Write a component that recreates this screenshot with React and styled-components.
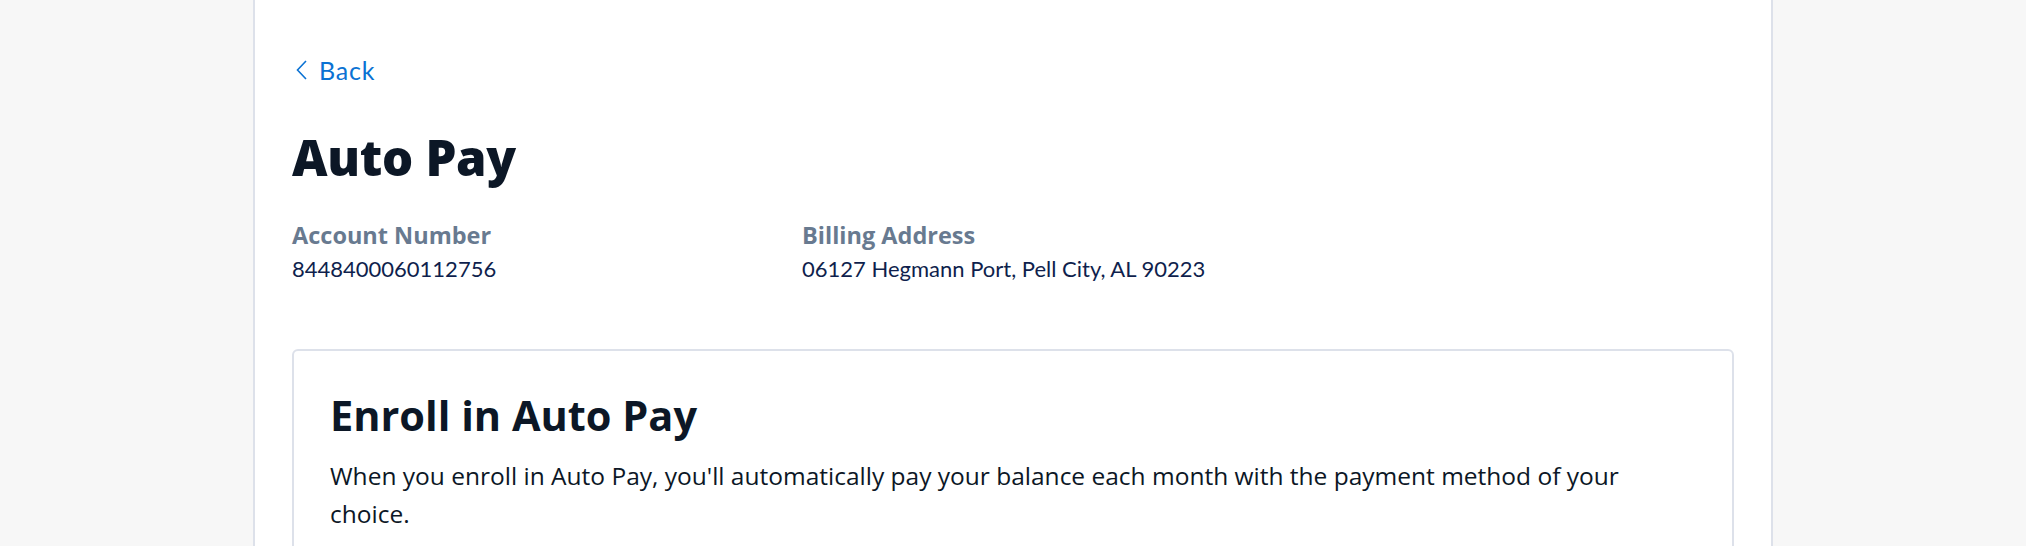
import React from 'react';
import styled, { createGlobalStyle } from 'styled-components';

const colors = {
  PAGE: '#f7f7f7',
  WHITE: '#ffffff',
  BORDER: '#dde1ea',
  BLUE: '#0b72d3',
  INK: '#0c1726',
  SLATE: '#687a90',
  NAVY: '#0f1f4d',
};

const GlobalStyle = createGlobalStyle`
  html, body {
    margin: 0;
    padding: 0;
    background: ${colors.PAGE};
    font-family: "Open Sans", "Noto Sans", sans-serif;
  }
`;

const Page = styled.div`
  display: flex;
  justify-content: center;
  min-height: 100vh;
`;

const Panel = styled.main`
  box-sizing: border-box;
  width: 1520px;
  min-height: 100vh;
  background: ${colors.WHITE};
  border-left: 2px solid ${colors.BORDER};
  border-right: 2px solid ${colors.BORDER};
  padding: 52px 37px 0;
`;

const BackLink = styled.a`
  display: inline-flex;
  align-items: center;
  gap: 12px;
  color: ${colors.BLUE};
  font-family: Lato, sans-serif;
  font-size: 25px;
  line-height: 36px;
  letter-spacing: 0.8px;
  text-decoration: none;
  cursor: pointer;
  margin-left: 4px;
`;

const Title = styled.h1`
  margin: 39px 0 0;
  color: ${colors.INK};
  font-size: 49px;
  line-height: 60px;
  font-weight: 800;
  letter-spacing: -0.3px;
`;

const InfoGrid = styled.div`
  display: grid;
  grid-template-columns: 510px 1fr;
  margin-top: 31px;
`;

const InfoLabel = styled.div`
  color: ${colors.SLATE};
  font-size: 23.5px;
  line-height: 34px;
  font-weight: 700;
`;

const InfoValue = styled.div`
  color: ${colors.NAVY};
  font-family: Lato, sans-serif;
  font-size: 22px;
  line-height: 34px;
`;

const Card = styled.section`
  margin-top: 63px;
  border: 2px solid ${colors.BORDER};
  border-radius: 6px;
  padding: 38px 36px 40px;
`;

const CardTitle = styled.h2`
  margin: 0;
  color: ${colors.INK};
  font-size: 41.5px;
  line-height: 52px;
  font-weight: 700;
`;

const CardText = styled.p`
  margin: 16px 0 0;
  color: ${colors.INK};
  font-size: 24.5px;
  line-height: 37.7px;
`;

const Chevron = () => (
  <svg width="11" height="20" viewBox="0 0 11 20" fill="none">
    <path d="M10 1L1.5 10L10 19" stroke="currentColor" strokeWidth="1.6" />
  </svg>
);

const InfoItem = ({ label, value }) => (
  <div>
    <InfoLabel>{label}</InfoLabel>
    <InfoValue>{value}</InfoValue>
  </div>
);

const App = () => (
  <Page>
    <GlobalStyle />
    <Panel>
      <BackLink>
        <Chevron />
        Back
      </BackLink>
      <Title>Auto Pay</Title>
      <InfoGrid>
        <InfoItem label="Account Number" value="8448400060112756" />
        <InfoItem label="Billing Address" value="06127 Hegmann Port, Pell City, AL 90223" />
      </InfoGrid>
      <Card>
        <CardTitle>Enroll in Auto Pay</CardTitle>
        <CardText>
          When you enroll in Auto Pay, you'll automatically pay your balance each month with the payment method of your
          choice.
        </CardText>
      </Card>
    </Panel>
  </Page>
);

export default App;
